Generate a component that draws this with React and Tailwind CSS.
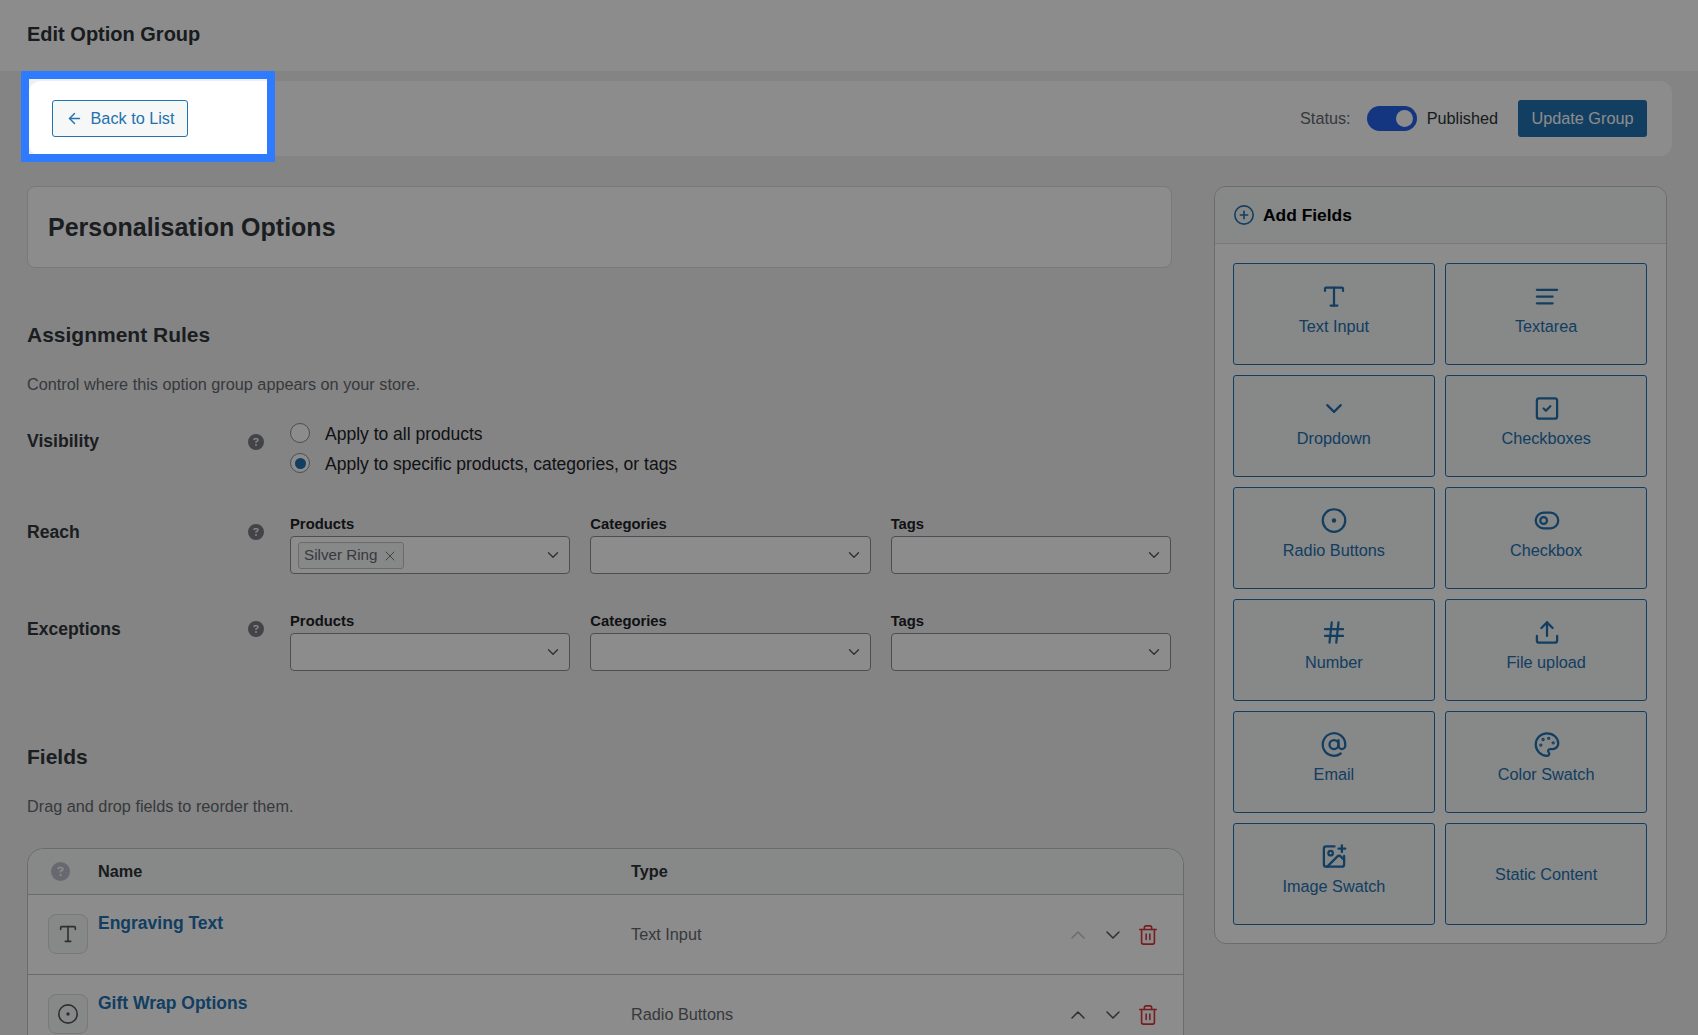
import {
  ArrowLeft, AtSign, ChevronDown, ChevronUp, CircleDot, CirclePlus, Hash, ImagePlus, Palette,
  SquareCheck, ToggleLeft, Trash2, Type, Upload, X,
} from 'lucide-react'
import { FaCircleQuestion } from 'react-icons/fa6'

const AlignIcon = ({ size = 27, className }) => (
  <svg width={size} height={size} viewBox="0 0 24 24" fill="none" stroke="currentColor" strokeWidth="2" strokeLinecap="round" className={className}>
    <path d="M21 6H3M17 12H3M17 18H3" />
  </svg>
)

const fieldTypes = [
  { label: 'Text Input', icon: Type },
  { label: 'Textarea', icon: AlignIcon },
  { label: 'Dropdown', icon: ChevronDown },
  { label: 'Checkboxes', icon: SquareCheck },
  { label: 'Radio Buttons', icon: CircleDot },
  { label: 'Checkbox', icon: ToggleLeft },
  { label: 'Number', icon: Hash },
  { label: 'File upload', icon: Upload },
  { label: 'Email', icon: AtSign },
  { label: 'Color Swatch', icon: Palette },
  { label: 'Image Swatch', icon: ImagePlus },
  { label: 'Static Content' },
]

const Help = () => (
  <div className="w-4 shrink-0 text-[#787c82]">
    <FaCircleQuestion size={16} />
  </div>
)

const Select = ({ label, chip }) => (
  <div>
    <div className="h-6 text-[14.8px] leading-6 font-bold text-[#1d2327]">{label}</div>
    <div className="flex h-[38px] items-center rounded-[4px] border border-[#8c8f94] bg-white pr-[7px] pl-[7px]">
      {chip && (
        <span className="mt-[1px] flex h-[27px] items-center gap-[5px] rounded-[3px] border border-[#c3c4c7] bg-[#f6f7f7] pr-[5px] pl-[5px] text-[15.2px] text-[#646970]">
          {chip}
          <X size={16} strokeWidth={1.5} className="text-[#787c82]" />
        </span>
      )}
      <ChevronDown size={18} strokeWidth={1.75} className="ml-auto text-[#50575e]" />
    </div>
  </div>
)

const RuleRow = ({ title, chip, className }) => (
  <div className={`flex w-[1144px] ${className}`}>
    <div className="flex w-[221px] shrink-0 items-center self-start pt-2 text-[17.6px] leading-6 font-bold text-[#32373c]">{title}</div>
    <div className="mt-[12px]"><Help /></div>
    <div className="ml-[26px] grid flex-1 grid-cols-3 gap-x-5">
      <Select label="Products" chip={chip} />
      <Select label="Categories" />
      <Select label="Tags" />
    </div>
  </div>
)

const Radio = ({ checked, children }) => (
  <label className="flex h-[30px] items-center gap-[15px] text-[17.5px] text-[#1d2327]">
    <span className="flex h-5 w-5 items-center justify-center rounded-full border border-[#8c8f94] bg-white">
      {checked && <span className="h-[11px] w-[11px] rounded-full bg-[#2271b1]" />}
    </span>
    <span className="pt-[3px]">{children}</span>
  </label>
)

const TableRow = ({ icon: Icon, name, type, upDisabled }) => (
  <div className="flex h-20 border-b border-[#c3c4c7]">
    <div className="mt-[19px] ml-5 flex h-10 w-10 shrink-0 items-center justify-center rounded-lg border border-[#dcdcde] bg-[#f6f7f7] text-[#50575e]">
      <Icon size={22} strokeWidth={1.75} />
    </div>
    <div className="mt-[16px] ml-[10px] w-[533px] text-[17.5px] leading-6 font-bold text-[#2271b1]">{name}</div>
    <div className="flex w-[300px] items-center text-[16.25px] text-[#646970]">{type}</div>
    <div className="ml-[135px] flex items-center gap-[11px]">
      <ChevronUp size={24} strokeWidth={1.5} className={upDisabled ? 'text-[#c3c4c7]' : 'text-[#50575e]'} />
      <ChevronDown size={24} strokeWidth={1.5} className="text-[#50575e]" />
      <Trash2 size={22} strokeWidth={1.75} className="ml-[1px] text-[#d63638]" />
    </div>
  </div>
)

export default function App() {
  return (
    <div className="relative h-screen overflow-hidden bg-[#f0f0f1] text-[16.25px] [font-family:'Liberation_Sans',Arial,sans-serif]">
      <header className="flex h-[71px] items-center bg-white px-[27px] pb-1 text-xl font-bold text-[#2c3338]">
        Edit Option Group
      </header>

      <div className="mt-[10px] mr-[26px] ml-[29px] flex h-[75px] items-center rounded-xl bg-white pr-[25px] pl-[23px]">
        <button className="flex h-[37px] w-[136px] items-center justify-center gap-2 rounded-[3px] border border-[#2271b1] bg-[#f6f7f7] text-[#2271b1]">
          <ArrowLeft size={17} />
          Back to List
        </button>
        <span className="ml-auto text-[#646970]">Status:</span>
        <span className="ml-4 flex h-[25px] w-[50px] items-center justify-end rounded-full bg-[#2563eb] pr-1">
          <span className="h-[17px] w-[17px] rounded-full bg-white" />
        </span>
        <span className="ml-[10px] text-[#2c3338]">Published</span>
        <button className="ml-[20px] h-[37px] w-[129px] rounded-[3px] bg-[#2271b1] text-white">Update Group</button>
      </div>

      <div className="mt-[30px] flex pl-[27px]">
        <main className="w-[1157px] shrink-0">
          <div className="flex h-[82px] w-[1145px] items-center rounded-lg border border-[#dcdcde] bg-white pt-[2px] pl-5 text-[25px] font-bold text-[#32373c]">
            Personalisation Options
          </div>

          <h2 className="mt-[55px] text-[21px] leading-6 font-bold text-[#32373c]">Assignment Rules</h2>
          <p className="mt-[25px] leading-6 text-[#646970]">Control where this option group appears on your store.</p>

          <div className="mt-[22px] flex w-[1144px]">
            <div className="w-[221px] shrink-0 pt-[11px] text-[17.6px] leading-6 font-bold text-[#32373c]">Visibility</div>
            <div className="mt-[16px]"><Help /></div>
            <div className="ml-[26px]">
              <Radio>Apply to all products</Radio>
              <Radio checked>Apply to specific products, categories, or tags</Radio>
            </div>
          </div>

          <RuleRow title="Reach" chip="Silver Ring" className="mt-[34px]" />
          <RuleRow title="Exceptions" className="mt-[35px]" />

          <h2 className="mt-[74px] text-[21px] leading-6 font-bold text-[#32373c]">Fields</h2>
          <p className="mt-[25px] leading-6 text-[#646970]">Drag and drop fields to reorder them.</p>

          <div className="mt-[30px] rounded-t-2xl border border-[#c3c4c7] bg-white">
            <div className="flex h-[46px] items-center rounded-t-2xl border-b border-[#c3c4c7] bg-[#f6f7f7] font-bold text-[#2c3338]">
              <FaCircleQuestion size={19} className="ml-[23px] text-[#bcc0cc]" />
              <span className="ml-[28px] w-[533px]">Name</span>
              <span>Type</span>
            </div>
            <TableRow icon={Type} name="Engraving Text" type="Text Input" upDisabled />
            <TableRow icon={CircleDot} name="Gift Wrap Options" type="Radio Buttons" />
          </div>
        </main>

        <aside className="ml-[30px] h-[758px] w-[453px] rounded-xl border border-[#c3c4c7] bg-white">
          <div className="flex h-[57px] items-center gap-2 rounded-t-xl border-b border-[#dcdcde] bg-[#f6f7f7] pl-[18px] text-[17.4px] font-bold text-black">
            <CirclePlus size={22} strokeWidth={1.75} className="text-[#2271b1]" />
            Add Fields
          </div>
          <div className="grid grid-cols-2 gap-[10.5px] pt-[19px] pr-[19px] pl-[18px]">
            {fieldTypes.map(({ label, icon: Icon }) => (
              <button
                key={label}
                className={`flex h-[101.5px] flex-col items-center justify-center rounded-[3px] border border-[#2271b1] bg-[#f6f7f7] text-[#2271b1] ${Icon ? 'pb-[6px]' : ''}`}
              >
                {Icon && <Icon size={27} className="mb-[4px] translate-x-[0.5px]" />}
                {label}
              </button>
            ))}
          </div>
        </aside>
      </div>

      {/* tour spotlight */}
      <div className="pointer-events-none absolute top-[79px] left-[29px] h-[75px] w-[238px] shadow-[0_0_0_9999px_rgba(0,0,0,0.45)] outline-8 outline-[#2f7bff]" />
    </div>
  )
}
